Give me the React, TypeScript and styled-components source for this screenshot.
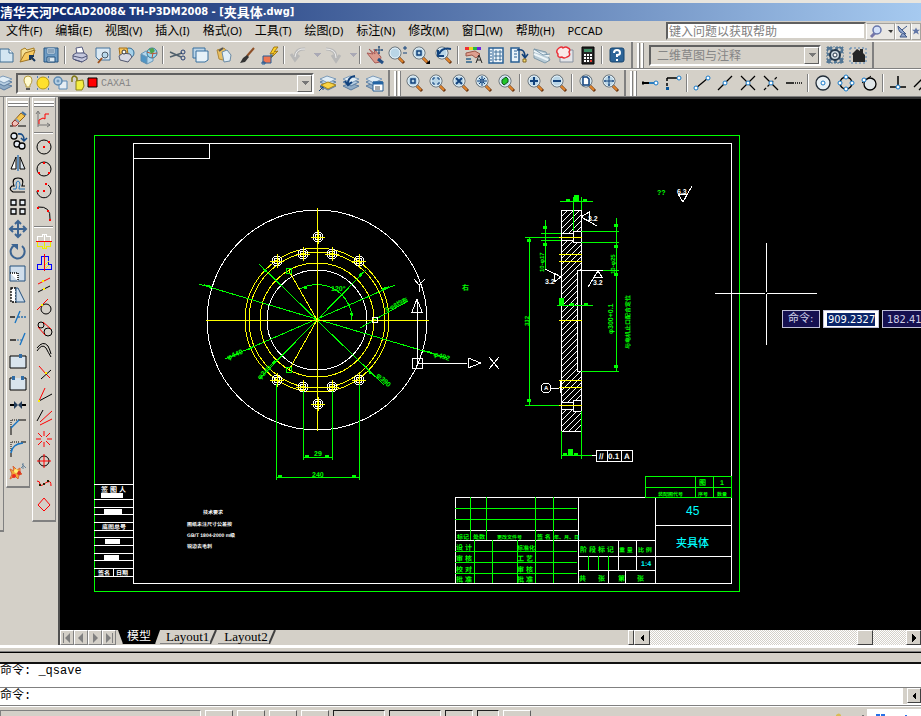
import React from "react";
import styled, { createGlobalStyle } from "styled-components";

const face = "#d4d0c8";
const shade = "#808080";
const sans = '"Noto Sans", "Noto Sans CJK SC", sans-serif';

const GlobalStyle = createGlobalStyle`
  * { box-sizing: border-box; }
  body { margin: 0; background: ${face}; overflow: hidden; }
  button, input, select { font: inherit; color: inherit; margin: 0; padding: 0; border-radius: 0; }
`;

const Window = styled.div`
  display: flex;
  flex-direction: column;
  height: 100vh;
  overflow: hidden;
  background: ${face};
  color: #000;
  font: 12px/16px ${sans};
  white-space: nowrap;
`;

const TitleBar = styled.header`
  flex: none;
  display: flex;
  align-items: center;
  height: 21px;
  border-top: 3px solid #e8e5de;
  background: linear-gradient(90deg, #0a246a, #a6caf0);
  color: #fff;
  font: bold 13px/18px "Noto Sans CJK SC", sans-serif;
`;

const TitleLatin = styled.span`
  font: bold 11px/18px "DejaVu Sans Condensed", "DejaVu Sans", sans-serif;
  white-space: pre;
`;

const MenuBar = styled.nav`
  flex: none;
  display: flex;
  align-items: center;
  gap: 13px;
  height: 20px;
  padding-left: 6px;
`;

const MenuItem = styled.button`
  border: 0;
  background: none;
  line-height: 18px;
`;

const MenuLatin = styled.span`
  font-size: 11px;
`;

const HelpSearch = styled.form`
  display: flex;
  align-items: center;
  height: 18px;
  margin: 0 0 0 auto;
`;

const SearchInput = styled.input`
  width: 200px;
  height: 18px;
  padding: 0 1px;
  border: 2px solid;
  border-color: #606060 ${face} ${face} #606060;
  background: #fff;
  line-height: 14px;
  &::placeholder { color: #808080; opacity: 1; }
`;

const SearchButton = styled.button<{ $w: number }>`
  display: flex;
  align-items: center;
  justify-content: center;
  width: ${(p) => p.$w}px;
  height: 17px;
  overflow: hidden;
  border: 1px solid #a5a39e;
  border-left-color: #fff;
  background: #e9e7e3;
`;

const ToolRow = styled.div`
  flex: none;
  display: flex;
  height: 28px;
  border-top: 1px solid #fff;
  border-bottom: 1px solid ${shade};
  overflow: hidden;
`;

const Toolbar = styled.div`
  flex: none;
  display: flex;
  align-items: center;
  padding-right: 3px;
  border-right: 2px solid ${shade};
`;

const Grip = styled.span<{ $gap: number }>`
  flex: none;
  width: 7px;
  height: 25px;
  margin: 0 ${(p) => p.$gap}px 0 4px;
  border: solid #fff;
  border-width: 0 0 0 2px;
  background: linear-gradient(90deg, ${shade} 0 1px, ${face} 1px 2px, #fff 2px 4px, ${shade} 4px);
`;

const Tool = styled.button<{ $w?: number }>`
  flex: none;
  display: flex;
  align-items: center;
  justify-content: ${(p) => (p.$w === undefined ? "center" : "flex-end")};
  width: ${(p) => p.$w ?? 23}px;
  height: 24px;
  border: 0;
  overflow: hidden;
  background: none;
  svg { flex: none; }
`;

const Sep = styled.span`
  flex: none;
  width: 2px;
  height: 18px;
  margin: 0 2px;
  border-left: 1px solid ${shade};
  background: #fff;
`;

const Combo = styled.label<{ $w: number }>`
  flex: none;
  display: flex;
  align-items: center;
  width: ${(p) => p.$w}px;
  height: 21px;
  margin: 0 2px;
  padding-left: 3px;
  border: 2px solid;
  border-color: #606060 #fff #fff #606060;
  color: #858585;
`;

const ComboSelect = styled.select<{ $mono?: boolean }>`
  flex: 1;
  min-width: 0;
  height: 17px;
  padding: 0 3px;
  border: 0;
  appearance: none;
  background: none;
  font-family: ${(p) => (p.$mono ? '"Liberation Mono", monospace' : sans)};
  font-size: ${(p) => (p.$mono ? 10 : 12)}px;
  line-height: 17px;
`;

const ComboArrow = styled.span`
  display: flex;
  align-items: center;
  justify-content: center;
  width: 15px;
  height: 17px;
  border: 1px solid;
  border-color: #fff #606060 #606060 #fff;
`;

const Body = styled.div`
  flex: 1;
  min-height: 0;
  display: flex;
  overflow: hidden;
`;

const Palettes = styled.aside`
  flex: none;
  display: flex;
  align-items: flex-start;
  width: 58px;
`;

const Palette = styled.div`
  display: flex;
  flex-direction: column;
  align-items: center;
  width: 25px;
  margin-right: 2px;
  padding: 3px 0 4px;
  border: solid;
  border-width: 1px 1px 2px 1px;
  border-color: #fff ${shade} ${shade} #fff;
`;

const PaletteStub = styled.div`
  width: 4px;
  height: 435px;
  margin-right: 2px;
  border-right: 1px solid ${shade};
  border-bottom: 2px solid ${shade};
`;

const PaletteGrip = styled.span`
  width: 20px;
  height: 7px;
  background: linear-gradient(#fff 0 2px, ${shade} 2px 3px, #fff 3px 5px, ${shade} 5px 6px, ${face} 6px);
`;

const PaletteTool = styled.button`
  display: flex;
  align-items: center;
  justify-content: center;
  width: 22px;
  height: 22px;
  border: 0;
  background: none;
`;

const PaletteSep = styled.span`
  width: 19px;
  height: 2px;
  margin: 2px 0;
  border-top: 1px solid ${shade};
  background: #fff;
`;

const Workspace = styled.main`
  flex: 1;
  min-width: 0;
  display: flex;
  flex-direction: column;
  border-left: 2px solid #505050;
`;

const Canvas = styled.section`
  position: relative;
  flex: 1;
  min-height: 0;
  overflow: hidden;
  border-top: 2px solid #303030;
  background: #000;
  & > svg { display: block; }
`;

const DynamicInput = styled.div`
  position: absolute;
  left: 722px;
  top: 211px;
  display: flex;
  gap: 3px;
  font: 11px/14px "DejaVu Sans Condensed", "Noto Sans CJK SC", sans-serif;
`;

const DynLabel = styled.label`
  width: 38px;
  height: 18px;
  padding: 1px 5px;
  border: 1px solid #c0c0d8;
  background: #151050;
  color: #d0d0e8;
`;

const DynField = styled.input<{ $active?: boolean }>`
  width: 56px;
  height: 18px;
  padding: 0 0 0 4px;
  border: 1px solid #c0c0d8;
  background: ${(p) =>
    p.$active ? "linear-gradient(#0a246a, #0a246a) center / 48px 13px no-repeat #fff" : "#151050"};
  color: ${(p) => (p.$active ? "#fff" : "#d0d0e8")};
`;

const TabRow = styled.div`
  flex: none;
  display: flex;
  height: 15px;
`;

const TabNav = styled.button`
  display: flex;
  align-items: center;
  justify-content: center;
  width: 14px;
  height: 15px;
  border: 1px solid;
  border-color: #fff ${shade} ${shade} #fff;
  background: ${face};
`;

const Tab = styled.button<{ $active?: boolean }>`
  height: 14px;
  border: 0;
  border-bottom: 1px solid ${(p) => (p.$active ? "#000" : shade)};
  padding: ${(p) => (p.$active ? "0 9px" : "0 1px 0 6px")};
  margin-left: ${(p) => (p.$active ? 2 : 0)}px;
  background: ${(p) => (p.$active ? "#000" : face)};
  color: ${(p) => (p.$active ? "#fff" : "#000")};
  clip-path: ${(p) => (p.$active ? "polygon(0 0, 100% 0, calc(100% - 5px) 100%, 5px 100%)" : "none")};
  font: ${(p) => (p.$active ? "12px/13px " : "13px/13px ")} "Liberation Serif", "Noto Sans CJK SC", serif;
`;

const ScrollBar = styled.div`
  display: flex;
  width: 293px;
  margin-left: auto;
`;

const Raised = styled.button<{ $w: number }>`
  flex: none;
  display: flex;
  align-items: center;
  justify-content: center;
  width: ${(p) => p.$w}px;
  height: 15px;
  border: 1px solid;
  border-color: #fff #404040 #404040 #fff;
  background: ${face};
`;

const Track = styled.span<{ $grow: number }>`
  flex: ${(p) => p.$grow} 0 0;
  background: repeating-conic-gradient(#fff 0 25%, ${face} 0 50%) 0 0 / 2px 2px;
`;

const Splitter = styled.div`
  flex: none;
  height: 19px;
  border-top: 3px solid #fff;
  border-bottom: 2px solid #101010;
  background: linear-gradient(${face} 0 3px, ${shade} 3px 4px, #000 4px 5px, ${face} 5px);
`;

const CommandLog = styled.output`
  flex: none;
  height: 24px;
  border-bottom: 1px solid ${shade};
  background: #fff;
  font: 12px/15px "Liberation Mono", "Noto Sans CJK SC", monospace;
`;

const CommandRow = styled.div`
  flex: none;
  display: flex;
  height: 17px;
  background: #fff;
  font: 12px/17px "Liberation Mono", "Noto Sans CJK SC", monospace;
`;

const CommandInput = styled.input`
  flex: 1;
  height: 16px;
  border: 0;
  border-right: 4px solid ${face};
  background: #fff;
`;

const StatusBar = styled.footer`
  flex: none;
  display: flex;
  gap: 4px;
  height: 11px;
  padding-top: 4px;
  border-top: 1px solid ${shade};
  box-shadow: inset 0 1px #fff;
  overflow: hidden;
`;

const StatusCell = styled.button<{ $w: number; $tone: "flat" | "up" | "down" }>`
  flex: none;
  width: ${(p) => p.$w}px;
  height: 18px;
  border: 1px solid;
  border-color: ${(p) =>
    p.$tone === "flat" ? `${shade} #fff #fff ${shade}` : p.$tone === "up" ? "#fff #606060 #606060 #fff" : "#202020 #fff #fff #202020"};
  background: ${face};
`;

const Tray = styled.div`
  flex: none;
  width: 86px;
  height: 10px;
  margin: -4px 0 0 auto;
`;

/* ---------- icons ---------- */

const Ico = ({ children }: { children?: React.ReactNode }) => (
  <svg width="20" height="20" viewBox="0 0 20 20" fill="none" stroke="#000" strokeWidth="1" aria-hidden="true">
    {children}
  </svg>
);

const Lens = ({ children, cx = 9 }: { children?: React.ReactNode; cx?: number }) => (
  <Ico>
    <path d={`M${cx + 4} 13 L${cx + 9} 18`} stroke="#6b3410" strokeWidth="3" />
    <path d={`M${cx + 4} 13 L${cx + 8} 17`} stroke="#e0852c" strokeWidth="2" />
    <circle cx={cx} cy="8" r="6" fill="#b9d5e6" stroke="#59646c" />
    <circle cx={cx} cy="8" r="5" stroke="#e7f3fa" />
    {children}
  </Ico>
);

const navy = "#12427c";
const steel = "#3c6492";

const Printer = () => (
  <>
    <path d="M6 3l6-1 2 6-7 1z" fill="#fff" stroke="#555b80" />
    <path d="M3 10l3-2 8 0 3 2v4l-5 3-9-3z" fill="#c3c6dc" stroke="#4f5578" />
    <path d="M3 11l9 2 5-2M5 15l7 2" stroke="#4f5578" />
  </>
);
const Layers = () => (
  <>
    <path d="M2 13l7-3 9 3-8 4z" fill="#8fabc5" stroke="#5c7da0" />
    <path d="M2 9l7-3 9 3-8 4z" fill="#b8cfe2" stroke="#5c7da0" />
    <path d="M2 6l7-3 9 3-8 4z" fill="#e0edf6" stroke="#7c9ab8" />
  </>
);
const Dots = ({ pts }: { pts: [number, number][] }) => (
  <>
    {pts.map(([x, y]) => (
      <circle key={`${x}-${y}`} cx={x} cy={y} r="2" fill="#fff" stroke="#1478c8" />
    ))}
  </>
);
const RedDots = ({ pts, fill = "#f00" }: { pts: [number, number][]; fill?: string }) => (
  <>
    {pts.map(([x, y]) => (
      <rect key={`${x}-${y}`} x={x - 1} y={y - 1} width="2" height="2" fill={fill} stroke="none" />
    ))}
  </>
);

const icons: Record<string, React.ReactNode> = {
  新建: <Ico><path d="M4 4h9l4 4v9H4z" fill="#d4e6f2" stroke="#3f6d92" /><path d="M13 4v4h4" fill="#fff" stroke="#3f6d92" /></Ico>,
  打开: <Ico><path d="M3 16V5l4-2 2 2 7-2v5" fill="#f4df94" stroke="#a87d24" /><path d="M2 17L7 8l10-3-3 9z" fill="#f7c95f" stroke="#a07423" /><path d="M17 16l-5-5M12 15v-4h4" stroke="#17365c" strokeWidth="2" /></Ico>,
  保存: <Ico><path d="M3 3h14v14H3z" fill="#6f9cc4" stroke="#24537f" /><path d="M6 3h8v6H6z" fill="#f2f7fa" stroke="#5681a8" /><path d="M6 12h8v5H6z" fill="#dce8f0" stroke="#24537f" /><path d="M8 13v3M7 5h6M7 7h6" stroke="#24537f" /></Ico>,
  打印: <Ico><Printer /></Ico>,
  打印预览: <Ico><path d="M3 3h14v12H6l-3-3z" fill="#dbe9f3" stroke="#45739c" /><path d="M9 13l-4 5" stroke="#a0521d" strokeWidth="2" /><circle cx="12" cy="10" r="3" fill="#b9d9ec" stroke="#4b5966" /></Ico>,
  发布: <Ico><circle cx="13" cy="8" r="5" fill="#a6d2ea" stroke="#326d98" /><path d="M3 3h8l1 6-8 1z" fill="#f9c65b" stroke="#a36e16" /><path d="M3 11l4-3 7 1 2 3-4 5-8-2z" fill="#d7d8e2" stroke="#52576f" /><circle cx="8" cy="7" r="2" fill="#fff" stroke="#333" /></Ico>,
  网上发布: <Ico><path d="M2 9l6 3v7l-6-3z" fill="#4f95c5" stroke="#5d8bad" /><path d="M2 9l5-3 7 3-6 3zM8 12l6-3v7l-6 3z" fill="#b4d7ed" stroke="#6b98b8" /><circle cx="13" cy="8" r="5" fill="#9bd5ec" stroke="#32789d" /><path d="M8 7q5 3 10 1M13 3q2 5 0 10" stroke="#bd5436" /><path d="M10 4l4-1 2 3-4 3z" fill="#4ea54d" stroke="none" /></Ico>,
  剪切: <Ico><path d="M2 7l11 5M2 12l12-4" stroke="#50606c" strokeWidth="1.5" /><circle cx="15" cy="7" r="2" stroke="#263e71" /><circle cx="15" cy="13" r="2" stroke="#263e71" /></Ico>,
  复制: <Ico><path d="M2 3h12v10H2z" fill="#bdd5e7" stroke="#366f9e" /><path d="M5 6h12v9l-3 2H5z" fill="#e6f1f8" stroke="#366f9e" /></Ico>,
  粘贴: <Ico><path d="M3 5l7-2 5 6-2 7-8-2z" fill="#e9bf63" stroke="#b08a3b" /><path d="M8 7l5-2 4 5-1 6-6 1z" fill="#e1eef6" stroke="#6b8ba5" /><path d="M5 6l4-3" stroke="#555" strokeWidth="2" /></Ico>,
  特性匹配: <Ico><path d="M17 3l-7 8" stroke="#8e5028" strokeWidth="2" /><path d="M10 10l2 2-4 5-5 1 3-5z" fill="#333" stroke="none" /></Ico>,
  块编辑器: <Ico><path d="M14 2l-4 7 4-1-4 6 8-8-4 1 4-5z" fill="#ffd427" stroke="#a27916" /><path d="M3 11h8v7H3z" fill="#ef7550" stroke="#275c96" /><path d="M2 17h3v2H2zM10 10h2v2" stroke="#275c96" /></Ico>,
  放弃: <Ico><path d="M16 4q-9-1-10 8M2 9l4 6 4-5" stroke="#b8b8b8" strokeWidth="3" /><path d="M16 4q-9-1-10 8" stroke="#eee" /></Ico>,
  重做: <Ico><path d="M3 4q10 0 10 9M9 10l4 6 4-6" stroke="#b8b8b8" strokeWidth="3" /><path d="M3 4q10 0 10 9" stroke="#eee" /></Ico>,
  平移: <Ico><path d="M2 8l6 1-4-5 6 5-1-5 7 8-1 5-5 1z" fill="#dc9b8c" stroke="#a85b58" /><path d="M13 14l5 4" stroke="#244f84" strokeWidth="3" /><path d="M14 1v8M10 5h8M13 2h2M13 8h2M11 4v2M17 4v2" stroke="#254c78" /></Ico>,
  实时缩放: <Lens cx={7}><path d="M15 3h4M17 1v4M15 8h4" stroke={navy} /></Lens>,
  窗口缩放: <Lens cx={8}><path d="M6 6h4v4H6z" stroke={navy} strokeWidth="1.5" /><path d="M15 19h4v-4z" fill="#000" stroke="none" /></Lens>,
  缩放上一个: <Lens cx={8}><path d="M5 9q3-7 12-5M4 5v6h6" stroke={navy} strokeWidth="2" /></Lens>,
  特性: <Ico><path d="M2 2h4v3H2z" fill="#f03030" stroke="none" /><path d="M6 2h4v3H6z" fill="#e6d921" stroke="none" /><path d="M10 2h4v3h-4z" fill="#26b847" stroke="none" /><path d="M14 2h4v3h-4z" fill="#6a25de" stroke="none" /><path d="M3 8l9-2 5 3-4 4-4-3-6 1z" fill="#df9f8f" stroke="#9c5649" /><path d="M13 18l3-8 3 8M14 15h4" stroke="#252525" /><path d="M3 14h5M3 17h6" stroke="#557d9a" strokeWidth="2" /></Ico>,
  设计中心: <Ico><path d="M3 3h14v15H3z" fill="#eef5fa" stroke="#285f94" strokeWidth="1.5" /><path d="M7 3v15M4 6h2M4 9h2M4 12h2M4 15h2" stroke="#285f94" /><path d="M9 6h2v2H9zM13 6h2v2h-2zM9 10h2v2H9zM13 10h2v2h-2zM9 14h2v1H9zM13 14h2v1h-2z" stroke="#45729b" /></Ico>,
  工具选项板: <Ico><path d="M2 3h8v14H2z" fill="#e8f2f9" stroke="#285f94" strokeWidth="1.5" /><path d="M5 6h3M5 9h3M5 12h3" stroke="#285f94" /><path d="M8 5q8-2 8 7M13 9l3 4 3-4" stroke={navy} strokeWidth="1.5" /><path d="M14 14h3v3h-3z" fill="#f7df74" stroke="#826420" /></Ico>,
  图纸集: <Ico><path d="M2 4l12 3 4 8-5 3-11-5z" fill="#b7cad5" stroke="#7f99a9" /><path d="M2 6l15 5M2 9l14 6" stroke="#edf5f8" strokeWidth="2" /><path d="M2 4l9 6 7-1" stroke="#7897ac" /></Ico>,
  标记集: <Ico><path d="M5 5h13v12H5z" fill="#e4e5e8" stroke="#858f9e" /><path d="M4 3q3-2 4 0 3-2 5 0q3 1 1 4 2 4-2 5-3 2-5 0-5 1-4-3-3-3 1-6z" fill="#f8e9e8" stroke="#ea2f37" strokeWidth="1.5" /></Ico>,
  计算器: <Ico><path d="M4 2h12v17H4z" fill="#242424" /><path d="M6 4h8v3H6z" fill="#3f8e64" stroke="none" /><path d="M6 10h2M9 10h2M12 10h2M6 13h2M9 13h2M12 13h2M6 16h2M9 16h2" stroke="#fff" strokeWidth="2" /><path d="M12 16h2" stroke="#e83c32" strokeWidth="2" /></Ico>,
  帮助: <Ico><rect x="3" y="3" width="14" height="14" rx="2" fill="#2d6497" stroke="#16456f" /><path d="M7 8q0-3 3-3t3 3q0 2-3 2v2M10 14v2" stroke="#fff" strokeWidth="2" /></Ico>,
  工作空间设置: <Ico><path d="M2 2h16v16H2z" fill="#537694" stroke="#537694" strokeDasharray="2 1" /><circle cx="10" cy="10" r="5" fill="#c7d4dc" stroke="#26394b" strokeWidth="2" /><circle cx="10" cy="10" r="7" stroke="#d4d0c8" strokeWidth="2" strokeDasharray="3 3" /><circle cx="10" cy="10" r="2" fill="#fff" stroke="#26394b" /></Ico>,
  我的工作空间: <Ico><path d="M2 3h16v15H2z" stroke="#4f80b2" strokeDasharray="2 2" /><path d="M4 9l5-5 3 2V4h3v4l2 2v7H5v-7z" fill="#252525" stroke="none" /></Ico>,
  图层特性管理器: <Ico><Layers /></Ico>,
  置为当前图层: <Ico><Layers /><path d="M3 12l7-3 8 3-8 4z" fill="#f8d345" stroke="#a98419" /><path d="M1 18l4-4M2 14h3v3" stroke={navy} /></Ico>,
  上一个图层: <Ico><Layers /><path d="M7 12q-1-8 7-9M4 8l3 4 4-3" stroke={navy} strokeWidth="2" /></Ico>,
  图层状态管理器: <Ico><Layers /><path d="M9 9h10v9H9z" fill="#fff" stroke="#285f94" /><path d="M9 10h10" stroke="#2364a4" strokeWidth="3" /><path d="M11 14h5M11 16h5" stroke="#555" /></Ico>,
  缩放窗口: <Lens><path d="M7 6h4v4H7z" stroke={navy} strokeWidth="1.5" /></Lens>,
  动态缩放: <Lens><path d="M6 7V5h2M10 5h2v2M12 9v2h-2M8 11H6V9" stroke={navy} /></Lens>,
  比例缩放: <Lens><path d="M6 5l6 6M12 5l-6 6" stroke={navy} strokeWidth="2" /></Lens>,
  中心缩放: <Lens><path d="M9 3v10M4 8h10M6 5l6 6M12 5l-6 6" stroke={navy} /><path d="M8 7h2v2H8z" fill="#fff" stroke={navy} /></Lens>,
  缩放对象: <Lens><path d="M6 7l4-3 2 2v3l-4 3-2-2z" fill="#20c629" stroke="#125916" /></Lens>,
  放大: <Lens><path d="M9 4v8M5 8h8" stroke={navy} strokeWidth="2" /></Lens>,
  缩小: <Lens><path d="M5 8h8" stroke={navy} strokeWidth="2" /></Lens>,
  全部缩放: <Lens><path d="M6 4h4l2 2v6H6z" fill="#fff" stroke={navy} strokeWidth="1.5" /></Lens>,
  范围缩放: <Lens><path d="M9 3v10M4 8h10M8 4h2M8 12h2M5 7v2M13 7v2" stroke={navy} /></Lens>,
  临时追踪点: <Ico><path d="M2 10h7" strokeWidth="2" /><path d="M9 10h5" stroke="#2b7cbd" strokeWidth="2" /><path d="M3 8v4" /><Dots pts={[[16, 10]]} /></Ico>,
  捕捉自: <Ico><path d="M4 5h10" strokeWidth="1.5" /><path d="M4 5v10" strokeWidth="1.5" strokeDasharray="3 2" /><path d="M3 14h3v3H3z" fill="#0a579a" stroke="none" /><Dots pts={[[16, 5]]} /></Ico>,
  端点: <Ico><path d="M4 15L16 5" strokeWidth="1.2" /><Dots pts={[[4, 15], [16, 5]]} /></Ico>,
  中点: <Ico><path d="M3 17L17 3" strokeWidth="1.2" /><Dots pts={[[10, 10]]} /></Ico>,
  交点: <Ico><path d="M3 3l14 14M3 17L17 3" strokeWidth="1.2" /><Dots pts={[[10, 10]]} /></Ico>,
  外观交点: <Ico><path d="M3 3l14 14" strokeWidth="1.2" /><path d="M3 17L17 3" strokeWidth="1.2" strokeDasharray="3 2" /><Dots pts={[[10, 10]]} /></Ico>,
  延长线: <Ico><path d="M2 10h8" strokeWidth="1.5" /><path d="M11 10h8" strokeWidth="1.5" strokeDasharray="1 1" /></Ico>,
  圆心: <Ico><circle cx="10" cy="10" r="7" fill="#e8f0f4" stroke="#222d38" strokeWidth="1.3" /><Dots pts={[[10, 10]]} /></Ico>,
  象限点: <Ico><circle cx="10" cy="10" r="6" strokeWidth="1.3" /><Dots pts={[[10, 4], [10, 16], [4, 10], [16, 10]]} /></Ico>,
  切点: <Ico><circle cx="11" cy="11" r="6" fill="#e0e6e8" strokeWidth="1.3" /><path d="M3 10l9-7" /><Dots pts={[[5, 7]]} /></Ico>,
  垂足: <Ico><path d="M10 3v10M2 14h16" strokeWidth="1.5" /><Dots pts={[[10, 14]]} /></Ico>,
  平行线: <Ico><path d="M3 14l9-9M8 17l10-10" strokeWidth="1.3" /></Ico>,
  删除: <Ico><path d="M2 17h3M10 17h8" /><path d="M4 14l9-10 4 3-9 9z" fill="#f5c64e" stroke="#8d5e1c" /><path d="M4 14l3-3 4 3-3 3H5z" fill="#f0c0b8" stroke="#982c27" /><path d="M8 10l3 3" stroke="#86a5c0" strokeWidth="2" /><path d="M14 3l4 3" stroke="#3f6fa2" strokeWidth="2" /></Ico>,
  复制对象: <Ico><circle cx="6" cy="5" r="3" fill="#e4eaf2" strokeWidth="1.3" /><circle cx="9" cy="13" r="3" fill="#e4eaf2" strokeWidth="1.3" /><circle cx="14" cy="15" r="3" fill="#e4eaf2" strokeWidth="1.3" /><path d="M10 3q6-1 6 6M13 7l3 3 3-3" stroke="#174b86" strokeWidth="1.5" /></Ico>,
  镜像: <Ico><path d="M8 4v12H3z" fill="#fff" /><path d="M12 4v12h5z" fill="#dce6ef" /><path d="M10 2v16" stroke="#3c78b4" strokeWidth="1.5" /></Ico>,
  偏移: <Ico><path d="M17 11h-3q3-8-4-8T6 11H4q-4 3 1 6h12" strokeWidth="1.2" /><path d="M17 14h-6q0-2 1-4 0-4-2-4t-2 4q1 2 0 4H5" stroke="#2478bf" /></Ico>,
  阵列: <Ico><path d="M3 3h5v5H3zM12 3h5v5h-5zM3 12h5v5H3zM12 12h5v5h-5z" fill="#e8eef4" strokeWidth="1.3" /></Ico>,
  移动: <Ico><path d="M10 3v14M3 10h14M7 5l3-3 3 3M7 15l3 3 3-3M5 7l-3 3 3 3M15 7l3 3-3 3" stroke={steel} strokeWidth="2" /></Ico>,
  旋转: <Ico><path d="M7 4a7 7 0 1 0 7 1" stroke={steel} strokeWidth="2" /><path d="M3 3h7v6z" fill={steel} stroke="none" /></Ico>,
  缩放: <Ico><path d="M2 3h15v15H2z" fill="#d0deeb" stroke="#24507c" /><path d="M2 10h8v8" fill="#fff" strokeDasharray="1 1" strokeWidth="1.5" /></Ico>,
  拉伸: <Ico><path d="M3 3h5v14H3z" fill="#fff" strokeWidth="1.3" strokeDasharray="2 1" /><path d="M8 3h2l7 14H8z" fill="#ccdbe9" stroke="#24507c" /></Ico>,
  修剪: <Ico><path d="M2 10h5" strokeWidth="1.3" /><path d="M10 10h8" stroke="#2b6fab" strokeWidth="1.3" strokeDasharray="2 1" /><path d="M12 4L7 16" stroke="#1774c3" strokeWidth="1.3" /></Ico>,
  延伸: <Ico><path d="M2 11h6" strokeWidth="1.3" /><path d="M9 11h5" stroke="#2b6fab" strokeDasharray="2 1" /><path d="M17 4l-5 12" stroke="#1774c3" strokeWidth="1.3" /></Ico>,
  打断于点: <Ico><path d="M2 5h16v12H2z" fill="#d9e4ed" /><path d="M11 3h3v4h-3z" fill="#326da5" stroke="none" /></Ico>,
  打断: <Ico><path d="M6 5H2v12h16V5h-4" fill="#d9e4ed" /><path d="M4 3h3v4H4zM13 3h3v4h-3z" fill="#326da5" stroke="none" /></Ico>,
  合并: <Ico><path d="M2 10h5M13 10h5" strokeWidth="2" /><path d="M6 6l4 4-4 4zM14 6l-4 4 4 4z" fill="#233d5a" stroke="none" /></Ico>,
  倒角: <Ico><path d="M3 18v-8M10 3h8" /><path d="M3 10V3h7" strokeDasharray="1 1" /><path d="M3 11l8-8" stroke="#1774c3" strokeWidth="1.5" /></Ico>,
  圆角: <Ico><path d="M3 18v-4M13 3h5" /><path d="M3 12V3h8" strokeDasharray="1 1" /><path d="M3 14q1-9 12-10" stroke="#1774c3" strokeWidth="1.5" /></Ico>,
  分解: <Ico><path d="M13 7l3-3M14 3l4 4M15 2v6" stroke="#68839b" /><path d="M2 8l4 2-1-5 4 4 3-2v4l2 2-3 1-1 4-3-3-5 3 2-5z" fill="#f2a839" stroke="#d9653a" /><circle cx="6" cy="15" r="2" fill="#ed2b22" stroke="none" /><circle cx="11" cy="12" r="2" fill="#d93028" stroke="none" /><circle cx="8" cy="10" r="2" fill="#fff076" stroke="none" /></Ico>,
  曲线: <Ico><path d="M4 18V3M2 5l2-3 2 3M4 16h12M13 14l3 2-3 2" stroke="#777" /><path d="M5 15v-4l4-2 2 1V5h4" stroke="#f00" /></Ico>,
  圆: <Ico><circle cx="10" cy="10" r="7" /><RedDots pts={[[10, 10], [15, 5]]} /></Ico>,
  三点圆: <Ico><circle cx="10" cy="10" r="7" /><RedDots pts={[[10, 4], [5, 14], [15, 14]]} /></Ico>,
  圆弧: <Ico><path d="M3 10a7 7 0 1 0 11-6" /><RedDots pts={[[12, 3], [4, 10], [10, 10]]} /></Ico>,
  三点圆弧: <Ico><path d="M4 4q13-1 12 12" /><RedDots pts={[[4, 5], [14, 8], [16, 17]]} /></Ico>,
  轴: <Ico><g shapeRendering="crispEdges"><path d="M3 10V5h5V3h4v2h4v5M10 3v7" stroke="#fff" /><path d="M3 10v5h5v2h4v-2h4v-5M10 10v7" stroke="#ee0" /><path d="M2 10h16" stroke="#f00" /></g></Ico>,
  端盖: <Ico><g shapeRendering="crispEdges"><path d="M7 3h7v8h3v5H3v-5h4z" stroke="#00f" /><path d="M11 12l4-4M12 15l3-3" stroke="#ee0" /><path d="M10 1v17" stroke="#f00" /></g></Ico>,
  等距线: <Ico><path d="M4 9l12-6" stroke="#f00" /><path d="M4 17l12-6" /><RedDots pts={[[9, 6], [10, 14]]} fill="#fe0" /></Ico>,
  切线: <Ico><path d="M3 13L14 2" stroke="#f00" /><circle cx="12" cy="12" r="5" /><RedDots pts={[[8, 8]]} fill="#fe0" /></Ico>,
  公切线: <Ico><circle cx="7" cy="6" r="3" /><circle cx="14" cy="13" r="4" /><path d="M9 3l8 7M4 8l7 8" stroke="#f00" /></Ico>,
  双曲线: <Ico><path d="M3 10q5-8 9-3 2 4 5 9M3 7q6-8 11-2 2 4 3 8" /></Ico>,
  修角: <Ico><path d="M5 3l7 8 4 4" stroke="#f00" /><path d="M7 16l10-9" /><RedDots pts={[[12, 10]]} fill="#fe0" /></Ico>,
  夹角: <Ico><path d="M5 16l6-13" stroke="#f00" /><path d="M5 16l13-7" /><RedDots pts={[[5, 16]]} fill="#fe0" /></Ico>,
  角分线: <Ico><path d="M3 14L9 3" /><path d="M6 15L18 4M6 18l12-6" stroke="#f00" /></Ico>,
  射线: <Ico><path d="M10 2v5M10 13v5M2 10h5M13 10h5M4 4l4 4M16 4l-4 4M4 16l4-4M16 16l-4-4" stroke="#f00" /></Ico>,
  中心线: <Ico><circle cx="10" cy="10" r="5" /><path d="M10 3v14M3 10h14" stroke="#f00" /></Ico>,
  波浪线: <Ico><path d="M3 8q3 0 3 3t4 0 4-2q3-2 3 4" stroke="#f00" /><RedDots pts={[[6, 12], [10, 11], [14, 8]]} fill="#220" /></Ico>,
  多边形: <Ico><path d="M10 3l6 7-6 6-6-6z" stroke="#f00" /></Ico>,
};

const Tools = ({ names }: { names: string[] }) => (
  <>
    {names.map((n, i) => (n === "|" ? <Sep key={i} /> : <Tool key={n} aria-label={n}>{icons[n]}</Tool>))}
  </>
);

const Tri = ({ dir, color = "#000" }: { dir: "l" | "r" | "d"; color?: string }) => (
  <svg width="8" height="8" viewBox="0 0 8 8" fill={color} shapeRendering="crispEdges" aria-hidden="true">
    <path d={{ l: "M6 0v8L2 4z", r: "M2 0v8l4-4z", d: "M0 2h8L4 6z" }[dir]} />
  </svg>
);

const Slash = () => (
  <svg width="8" height="14" viewBox="0 0 8 14" stroke="#404040" fill="none" aria-hidden="true">
    <path d="M0 14L6 0" strokeWidth="2" />
  </svg>
);

/* ---------- drawing ---------- */

const G = "#00ff00";
const W = "#ffffff";
const Y = "#ffff00";
const C = "#00ffff";

type Label = [string, number, number, string?, number?, number?];

const L = ({ d, c }: { d: string; c: string }) => <path d={d} stroke={c} />;

const Labels = ({ items }: { items: Label[] }) => (
  <g stroke="none" fontFamily='"Liberation Sans", "Noto Sans CJK SC", sans-serif' fontWeight="bold" textRendering="geometricPrecision">
    {items.map(([t, x, y, c = G, size = 7, rot = 0]) => (
      <text key={`${t}${x}${y}`} x={x} y={y} fill={c} fontSize={size} transform={rot ? `rotate(${rot} ${x} ${y})` : undefined}>
        {t}
      </text>
    ))}
  </g>
);

const boltHoles = [[278, 262], [304, 255], [333, 255], [360, 262], [278, 381], [304, 388], [333, 388], [360, 381], [319, 238], [319, 405]];

const marks = [
  [569, 202], [586, 202], [546, 229], [546, 246], [530, 242], [530, 402], [617, 227], [617, 248], [617, 276],
  [617, 368], [573, 306], [587, 306], [566, 456], [577, 456], [308, 458], [328, 458], [281, 478], [355, 478],
];

const labels: Label[] = [
  ["φ440", 229, 361, G, 7, -23], ["φ340", 261, 381, G, 7, -45], ["φ390", 377, 377, G, 7, 43], ["φ492", 434, 357, G, 7, 17],
  ["120°", 332, 292, G, 7], ["3-φ8均布", 387, 313, G, 6, -26], ["29", 315, 457, G, 7], ["240", 313, 478, G, 7],
  ["右", 463, 291, G, 7],
  ["10-φ17", 545, 273, G, 6, -90], ["10-φ25", 616, 275, G, 6, -90], ["332", 530, 327, G, 6, -90],
  ["φ300+0.1", 614, 335, G, 7, -90], ["与电机止口配合定位", 631, 350, G, 6, -90],
  ["3.2", 589, 222, W, 7], ["3.2", 546, 285, W, 7], ["3.2", 594, 286, W, 7],
  ["A", 545, 391, W, 6], ["??", 658, 196, G, 7], ["6.3", 678, 195, W, 7],
  ["//", 600, 460, W, 8], ["0.1", 609, 460, W, 8], ["A", 625, 460, W, 8],
  ["签 图 人", 102, 493, W, 7], ["底图总号", 103, 530, W, 6], ["签名", 99, 576, W, 6], ["日期", 117, 576, W, 6],
  ["技术要求", 204, 515, W, 5], ["图纸未注尺寸公差按", 188, 527, W, 5], ["GB/T 1804-2000 m级", 188, 538, W, 5],
  ["锐边去毛刺", 188, 549, W, 5],
  ["图", 700, 486, G, 7], ["1", 721, 486, G, 7], ["装配图代号", 659, 497, G, 5], ["序号", 699, 497, G, 5], ["数量", 718, 497, G, 5],
  ["标记", 458, 540, G, 6], ["处数", 474, 540, G, 6], ["更改文件号", 498, 540, G, 5], ["签 名", 538, 540, G, 6], ["年、月、日", 555, 540, G, 5],
  ["设 计", 457, 551, G, 7], ["标准化", 518, 551, G, 6], ["审 核", 457, 562, G, 7], ["工 艺", 518, 562, G, 7],
  ["校 对", 457, 573, G, 7], ["审 核", 518, 573, G, 7], ["批 准", 457, 583, G, 7], ["批 准", 518, 583, G, 7],
  ["阶 段 标 记", 581, 553, G, 7], ["重 量", 620, 553, G, 6], ["比 例", 639, 553, G, 6], ["1:4", 642, 567, C, 7],
  ["共", 580, 582, G, 7], ["张", 599, 582, G, 7], ["第", 619, 582, G, 7], ["张", 638, 582, G, 7],
];

const Drawing = () => (
  <svg width="861" height="531" viewBox="61 100 861 531" fill="none" strokeWidth="1" shapeRendering="crispEdges" role="img" aria-label="夹具体">
    <defs>
      <pattern id="hatch" width="6" height="6" patternUnits="userSpaceOnUse">
        <path d="M-1 7L7 -1M-1 1L1 -1M5 7L7 5" stroke={W} />
      </pattern>
    </defs>
    <rect x="95" y="136" width="645" height="456" stroke={G} />
    <rect x="134" y="144" width="598" height="440" stroke={W} />
    <L c={W} d="M134 159H210V144" />
    <L c={W} d="M95 485H134M95 500H134M95 508H134M95 515H134M95 523H134M95 531H134M95 538H134M95 546H134M95 554H134M95 561H134M95 569H134M95 577H134M114 569V577" />
    <path d="M102 494h22v5h-22zM105 510h18v5h-18zM106 540h15v5h-15zM105 556h15v5h-15z" fill={W} />

    <circle cx="318" cy="321" r="110" stroke={W} />
    <circle cx="318" cy="321" r="72" stroke={Y} />
    <circle cx="318" cy="321" r="68" stroke={Y} />
    <circle cx="318" cy="321" r="57" stroke={Y} />
    <circle cx="318" cy="321" r="50" stroke={W} />
    <L c={G} d="M200 285L448 359M260 265L385 386M226 360L396 286M260 380L367 271M361 329L409 302" />
    <path d="M301 290A35 35 0 0 1 353 321" stroke={G} />
    <L c={Y} d="M318 321L290 272M318 321L290 371" />
    <L c={Y} d="M207 321H430M318 209V432" />
    {boltHoles.map(([x, y]) => (
      <g key={`${x}-${y}`}>
        <circle cx={x} cy={y} r="5" stroke={W} />
        <circle cx={x} cy={y} r="3" stroke={W} />
        <L c={Y} d={`M${x - 7} ${y}H${x + 7}M${x} ${y - 7}V${y + 7}`} />
      </g>
    ))}
    <circle cx="290" cy="272" r="3" stroke={G} />
    <circle cx="290" cy="371" r="3" stroke={G} />
    <circle cx="376" cy="321" r="3" stroke={W} />
    <path d="M204 285l9 2-1 3zM263 268l5 3-2 3zM364 273l-5 3 3 3zM391 287l-8 2 1 3zM244 352l8-4 1 2zM271 367l4-6 2 2zM368 370l5 3-2 3zM424 351l8 4 1-2zM301 289l7-2v3zM351 314h3l-1 7z" fill={G} />
    <L c={G} d="M304 392V461M333 392V461M304 458H333M277 385V481M360 385V481M277 478H360" />

    <rect x="413" y="359" width="10" height="10" stroke={W} />
    <L c={W} d="M418 364V300M418 364H468M413 313L418 300L423 313ZM469 359L482 364L469 369ZM490 358L500 370M500 358L490 370M415 280L420 286L426 280M420 286V293" />

    <path d="M562 211h20v60h-4v101h4v60h-20z" fill="url(#hatch)" stroke={W} />
    <path d="M562 234h12v-2h8v11h-8v-2h-12zM562 403h12v-2h8v11h-8v-2h-12z" fill="#000" stroke={W} />
    <L c={W} d="M574 232V243M574 401V412M582 271V372M578 271H604" />
    <L c={G} d="M561 202H594M574 198V232M582 198V211M546 221V270M542 234H562M542 241H562M526 238H562M530 238V406M526 406H562M617 219V372M582 232H620M582 243H620M604 271H620M582 372H620M558 306H594M562 432V460M582 412V460M562 456H593" />
    <L c={Y} d="M560 238H583M560 255H583M560 262H583M560 321H583M560 381H583M560 388H583M560 406H583" />
    {marks.map(([x, y]) => (
      <rect key={`${x}-${y}`} x={x - 2} y={y - 2} width="4" height="3" fill={G} />
    ))}
    <path d="M575 196h5v6h-5zM560 299h5v7h-5zM569 450h5v6h-5z" fill={G} />
    <L c={W} d="M582 218L590 213V222L582 218L598 227M546 270L562 278L555 274V283L562 278M595 278H603L599 272L595 278M599 272L589 288M552 389H560M561 382V394M593 456H597M597 451H633V462H597ZM608 451V462M622 451V462" />
    <circle cx="547" cy="389" r="5" stroke={W} />
    <L c={W} d="M679 195H688L684 203L679 195M684 203L693 187" />

    <L c={W} d="M456 498H732M456 531H579M456 541H656M456 498V584M579 498V584M656 498V584M656 526H732M579 557H732M579 571H656M619 541V571M637 541V571M609 571V584M626 571V584" />
    <L c={G} d="M456 509H578M456 520H578M456 552H578M456 563H578M456 574H578M471 498V541M487 498V541M536 498V584M554 498V584M475 541V584M493 541V584M518 541V584M589 557V571M599 557V571M609 557V571M646 477H732V498H646ZM646 488H732M696 477V498M714 477V498" />
    <Labels items={labels} />
    <g stroke="none" fill={C} fontFamily='"Liberation Sans", "Noto Sans CJK SC", sans-serif'>
      <text x="687" y="516" fontSize="12">45</text>
      <text x="677" y="548" fontSize="11" fontWeight="500">夹具体</text>
    </g>
    <L c={W} d="M716 294H766M768 294H818M767 244V293M767 295V346" />
  </svg>
);

/* ---------- page ---------- */

const menus: [string, string][] = [
  ["文件", "(F)"], ["编辑", "(E)"], ["视图", "(V)"], ["插入", "(I)"], ["格式", "(O)"], ["工具", "(T)"],
  ["绘图", "(D)"], ["标注", "(N)"], ["修改", "(M)"], ["窗口", "(W)"], ["帮助", "(H)"], ["", "PCCAD"],
];

const modifyTools = ["删除", "复制对象", "镜像", "偏移", "阵列", "移动", "旋转", "缩放", "拉伸", "修剪", "延伸", "打断于点", "打断", "合并", "倒角", "圆角", "分解"];
const sketchTools = ["曲线", "|", "圆", "三点圆", "圆弧", "三点圆弧", "|", "轴", "端盖", "等距线", "切线", "公切线", "双曲线", "修角", "夹角", "角分线", "射线", "中心线", "波浪线", "多边形"];

const statusCells: [number, "flat" | "up" | "down"][] = [
  [201, "flat"], [28, "up"], [28, "up"], [28, "up"], [28, "up"], [52, "down"], [52, "down"], [28, "down"], [22, "down"], [28, "up"],
];

const VerticalTools = ({ names }: { names: string[] }) => (
  <>
    <PaletteGrip />
    {names.map((n, i) => (n === "|" ? <PaletteSep key={i} /> : <PaletteTool key={n} aria-label={n}>{icons[n]}</PaletteTool>))}
  </>
);

export default function App() {
  return (
    <Window>
      <GlobalStyle />
      <TitleBar>
        清华天河<TitleLatin>{"PCCAD2008& TH-P3DM2008 - ["}</TitleLatin>夹具体<TitleLatin>.dwg]</TitleLatin>
      </TitleBar>
      <MenuBar>
        {menus.map(([name, key]) => (
          <MenuItem key={key}>{name}<MenuLatin>{key}</MenuLatin></MenuItem>
        ))}
        <HelpSearch onSubmit={(e) => e.preventDefault()}>
          <SearchInput aria-label="帮助搜索" placeholder="键入问题以获取帮助" />
          <SearchButton $w={29} aria-label="搜索">
            <svg width="24" height="15" viewBox="0 0 24 15" fill="none" aria-hidden="true">
              <path d="M6 9l-4 4" stroke="#7777a8" strokeWidth="3" />
              <circle cx="8" cy="6" r="4" fill="#d5e2fa" stroke="#6675ab" strokeWidth="1.5" />
              <path d="M19 6h5l-2 3z" fill="#333" />
            </svg>
          </SearchButton>
          <SearchButton $w={16} aria-label="通讯中心">
            <svg width="14" height="14" viewBox="0 0 14 14" fill="#8fa4cc" stroke="#405888" aria-hidden="true">
              <path d="M2 2q0 8 8 8zM6 6l5-4M6 10l-2 3h7l-3-3" />
            </svg>
          </SearchButton>
          <SearchButton $w={10} aria-label="收藏夹">
            <svg width="14" height="14" viewBox="0 0 14 14" fill="#6075a6" aria-hidden="true">
              <path d="M7 1l2 4h5l-4 3 2 5-5-3-5 3 2-5-4-3h5z" />
            </svg>
          </SearchButton>
        </HelpSearch>
      </MenuBar>

      <ToolRow>
        <Toolbar>
          <Tool $w={16} aria-label="新建">{icons["新建"]}</Tool>
          <Tools names={["打开", "保存", "|", "打印", "打印预览", "发布", "网上发布", "|", "剪切", "复制", "粘贴", "特性匹配", "块编辑器", "|", "放弃"]} />
          <Tool $w={11} aria-label="放弃列表"><Tri dir="d" color="#aaa9b5" /></Tool>
          <Tools names={["重做"]} />
          <Tool $w={13} aria-label="重做列表"><Tri dir="d" color="#aaa9b5" /></Tool>
          <Tools names={["|", "平移", "实时缩放", "窗口缩放", "缩放上一个", "|", "特性", "设计中心", "工具选项板", "图纸集", "标记集", "计算器", "|", "帮助"]} />
        </Toolbar>
        <Toolbar>
          <Grip $gap={3} />
          <Combo $w={172}>
            <ComboSelect aria-label="工作空间"><option>二维草图与注释</option></ComboSelect>
            <ComboArrow><Tri dir="d" color="#777" /></ComboArrow>
          </Combo>
          <Tools names={["工作空间设置", "我的工作空间"]} />
        </Toolbar>
      </ToolRow>

      <ToolRow>
        <Toolbar>
          <Tool $w={14} aria-label="图层特性管理器">{icons["图层特性管理器"]}</Tool>
          <Combo $w={298}>
            <svg width="77" height="18" viewBox="0 0 77 18" fill="none" aria-hidden="true">
              <path d="M3 6q0-4 4-4t4 4q0 3-2 5v2H5v-2Q3 9 3 6z" fill="#fffbd0" stroke="#b59a3c" />
              <path d="M5 15h4" stroke="#555" strokeWidth="2" />
              <circle cx="22" cy="9" r="6" fill="#ffe02c" stroke="#b79916" />
              <path d="M16 3h1M27 3h1M16 15h1M27 15h1" stroke="#4d7eb8" strokeWidth="2" />
              <path d="M38 7h8v8h-8z" fill="#e6edf3" stroke="#5989b6" />
              <circle cx="37" cy="7" r="4" fill="#b4cfe4" stroke="#5d89b0" strokeWidth="1.5" />
              <circle cx="37" cy="7" r="1" stroke="#5d89b0" />
              <path d="M51 8V4q2-4 5 0v4" stroke="#807713" strokeWidth="1.5" />
              <path d="M55 7l7-1 1 6-2 4h-6z" fill="#f4ed42" stroke="#8a8115" />
              <path d="M67 4h9v9h-9z" fill="#f00" stroke="#000" />
            </svg>
            <ComboSelect $mono aria-label="图层"><option>CAXA1</option></ComboSelect>
            <ComboArrow><Tri dir="d" color="#777" /></ComboArrow>
          </Combo>
          <Tools names={["置为当前图层", "上一个图层", "图层状态管理器"]} />
        </Toolbar>
        <Toolbar>
          <Grip $gap={1} />
          <Tools names={["缩放窗口", "动态缩放", "比例缩放", "中心缩放", "缩放对象", "|", "放大", "缩小", "|", "全部缩放", "范围缩放"]} />
        </Toolbar>
        <Toolbar>
          <Grip $gap={1} />
          <Tools names={["临时追踪点", "捕捉自", "|", "端点", "中点", "交点", "外观交点", "延长线", "|", "圆心", "象限点", "切点", "|", "垂足", "平行线"]} />
        </Toolbar>
      </ToolRow>

      <Body>
        <Palettes>
          <PaletteStub />
          <Palette><VerticalTools names={modifyTools} /></Palette>
          <Palette><VerticalTools names={sketchTools} /></Palette>
        </Palettes>
        <Workspace>
          <Canvas>
            <Drawing />
            <DynamicInput>
              <DynLabel htmlFor="dyn-x">命令:</DynLabel>
              <DynField id="dyn-x" $active defaultValue="909.2327" />
              <DynField aria-label="Y" defaultValue="182.41" />
            </DynamicInput>
          </Canvas>
          <TabRow>
            {["first", "prev", "next", "last"].map((n) => (
              <TabNav key={n} aria-label={n}>
                <svg width="12" height="10" viewBox="0 0 12 10" fill={shade} aria-hidden="true">
                  <path d={{ first: "M2 0h1v10H2zM9 0v10L4 5z", prev: "M8 0v10L3 5z", next: "M4 0v10l5-5z", last: "M9 0h1v10H9zM3 0v10l5-5z" }[n]} />
                </svg>
              </TabNav>
            ))}
            <Tab $active>模型</Tab>
            <Tab>Layout1</Tab>
            <Slash />
            <Tab>Layout2</Tab>
            <Slash />
            <ScrollBar>
              <Raised $w={6} aria-label="拆分条" />
              <Raised $w={16} aria-label="向左滚动"><Tri dir="l" /></Raised>
              <Track $grow={207} />
              <Raised $w={16} aria-label="滚动块" />
              <Track $grow={33} />
              <Raised $w={15} aria-label="向右滚动"><Tri dir="r" /></Raised>
            </ScrollBar>
          </TabRow>
        </Workspace>
      </Body>

      <Splitter />
      <CommandLog>命令: _qsave</CommandLog>
      <CommandRow>
        <label htmlFor="command">命令:</label>
        <CommandInput id="command" />
        <Raised $w={14} aria-label="滚动命令行"><Tri dir="l" /></Raised>
      </CommandRow>
      <StatusBar>
        {statusCells.map(([w, tone], i) => (
          <StatusCell key={i} $w={w} $tone={tone} aria-label={`状态 ${i + 1}`} />
        ))}
        <Tray>
          <svg width="86" height="10" viewBox="0 0 86 10" aria-hidden="true">
            <path d="M32 1h54v9H32z" fill="#fff" />
            <path d="M1 7q3-3 5 0v3H1z" fill="#d8bc55" />
            <path d="M27 7h2v3h-2z" fill="#777" />
            <path d="M41 6h4v4h-4zM46 6h4v4h-4zM70 7h2v3h-2z" fill="#2872e8" />
          </svg>
        </Tray>
      </StatusBar>
    </Window>
  );
}
